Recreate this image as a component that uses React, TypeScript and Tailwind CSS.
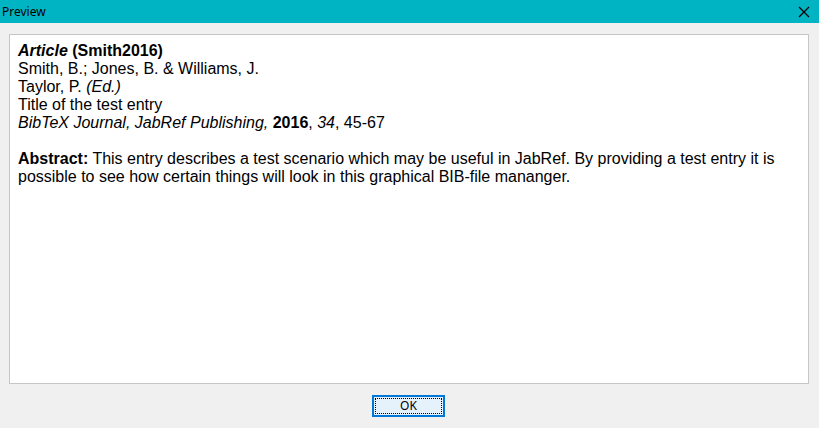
import React from "react";

const App = () => {
  return (
    <div className="flex flex-col w-[819px] h-[428px] bg-[#f0f0f0] overflow-hidden">
      <div className="flex h-[23px] items-center justify-between bg-[#00b4c4] pl-[2px] pr-[9px]">
        <span className="text-[12px] text-black font-['Segoe_UI','Noto_Sans',sans-serif]">Preview</span>
        <svg width="12" height="12" viewBox="0 0 12 12">
          <path d="M1 1 L11 11 M11 1 L1 11" stroke="#000" strokeWidth="1.2" fill="none" />
        </svg>
      </div>
      <div className="mt-[11px] ml-[9px] w-[800px] h-[350px] border border-[#c6c6c6] bg-white px-[8px] pt-[7px] text-[16px] leading-[18px] text-black font-['Liberation_Sans',Arial,sans-serif]">
        <div>
          <b><i>Article</i></b> <b>(Smith2016)</b>
        </div>
        <div>Smith, B.; Jones, B. &amp; Williams, J.</div>
        <div>
          Taylor, P. <i>(Ed.)</i>
        </div>
        <div>Title of the test entry</div>
        <div>
          <i>BibTeX Journal, JabRef Publishing,</i> <b>2016</b>, <i>34</i>, 45-67
        </div>
        <div className="mt-[18px]">
          <b>Abstract:</b> This entry describes a test scenario which may be useful in JabRef. By providing a test entry it is possible to see how certain things will look in this graphical BIB-file mananger.
        </div>
      </div>
      <div className="flex justify-center mt-[11px] pr-[2px]">
        <button className="flex items-center justify-center w-[73px] h-[22px] border-2 border-[#0078d7] bg-[#e5f1fb] p-[1px]">
          <span className="flex items-center justify-center w-full h-full border border-dotted border-black text-[12px] text-black font-['Segoe_UI','Noto_Sans',sans-serif]">
            OK
          </span>
        </button>
      </div>
    </div>
  );
};

export default App;
